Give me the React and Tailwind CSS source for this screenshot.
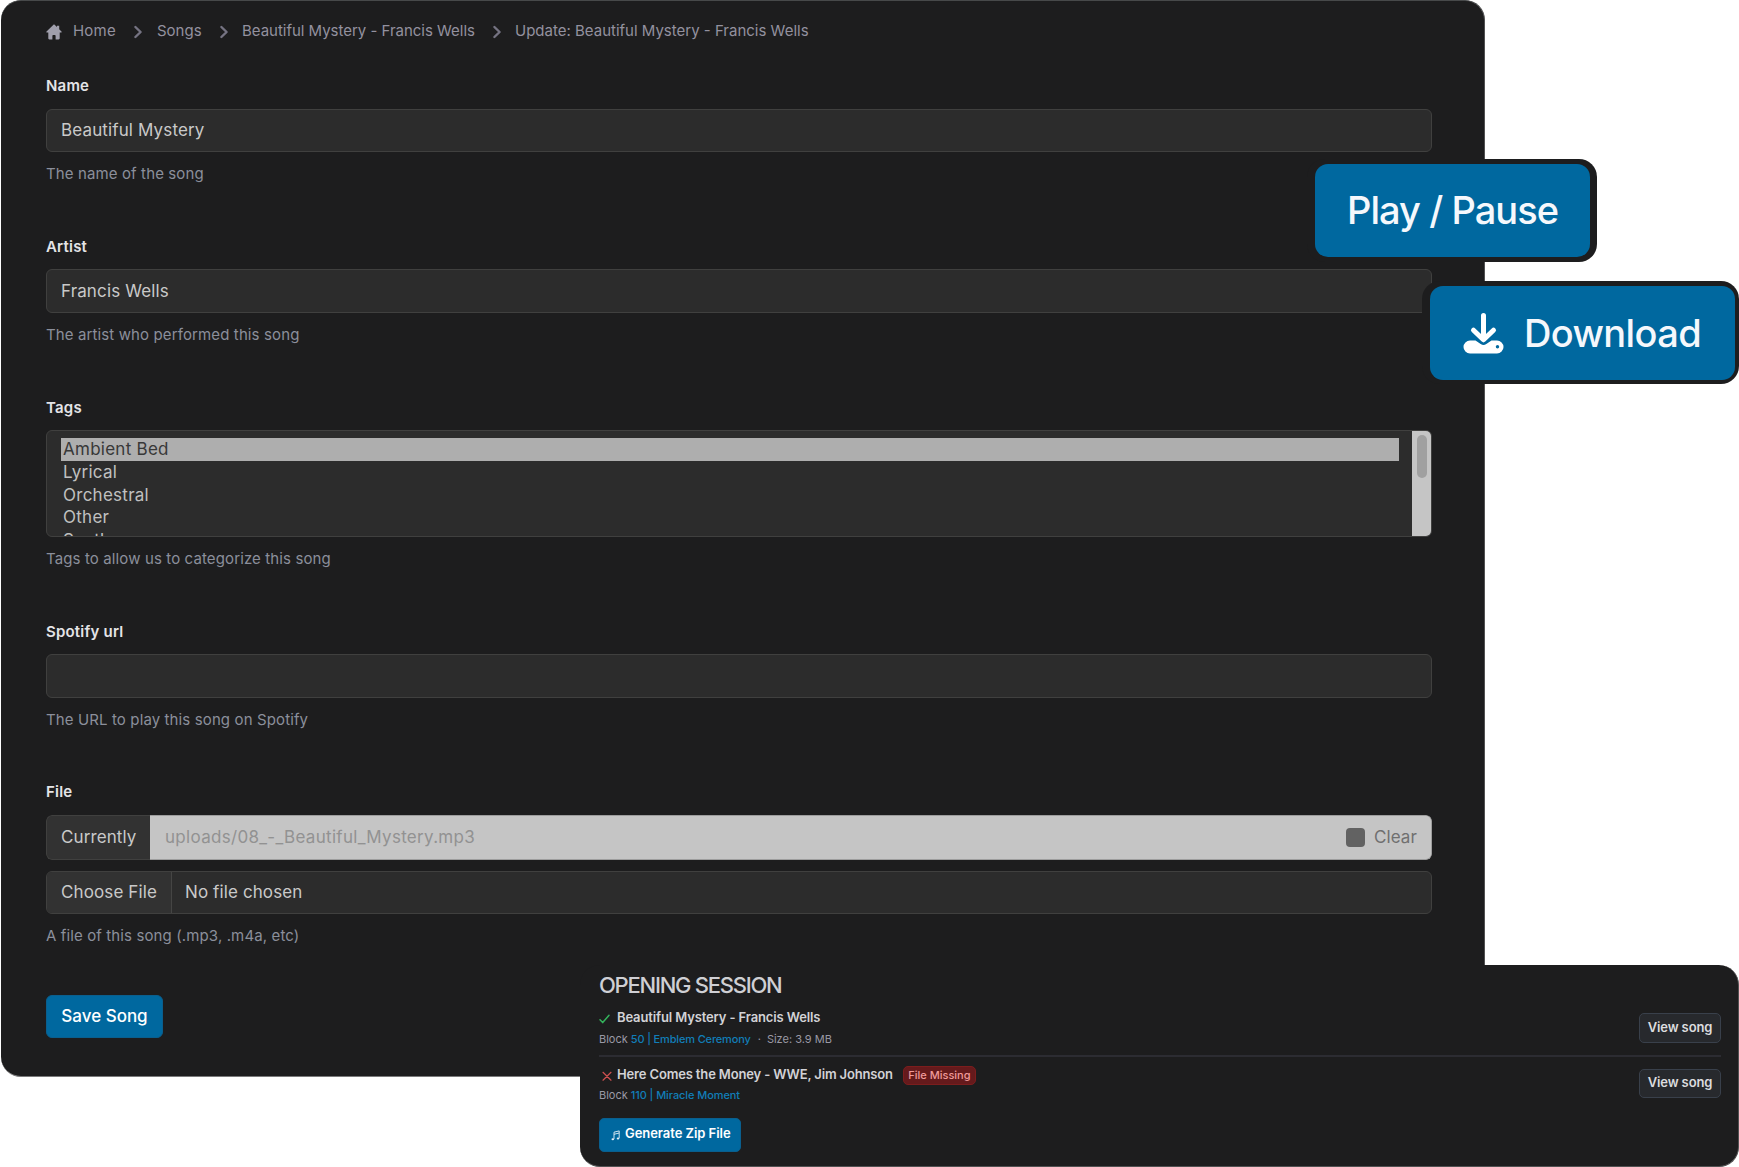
const LABEL = "h-5 leading-5 text-[15px] font-semibold tracking-[0.2px] text-[#e4e4e7]";
const HELP = "h-5 leading-5 text-[15px] tracking-[0.12px] text-[#8b8f9b]";
const INPUT = "flex items-center rounded-[6px] border border-[#40403f] bg-[#2c2c2c] px-[14px] text-[17px] tracking-[0.13px] text-[#c9c9c9]";

function HomeIcon() {
  return (
    <svg className="mt-px h-4 w-4 text-[#a09fac]" viewBox="0 0 16 16" fill="currentColor">
      <path d="M8 .2.500 7.500c-.4.500-.1 1.100.4 1.100h1.400v5.700c0 .7.400 1.200 1.100 1.200h3v-3.700c0-.5.300-.8.800-.8h1.600c.5 0 .8.300.8.800v3.700h3c.7 0 1.100-.5 1.100-1.200V8.600h1.400c.5 0 .8-.6.400-1.100L13.200 5.200V1.800h-2.200v1.300z" />
    </svg>
  );
}

function Chevron({ className }) {
  return (
    <svg className={"mt-[2px] h-[14px] w-[10px] shrink-0 " + className} viewBox="0 0 10 14" fill="none" stroke="#757382" strokeWidth="2.4" strokeLinecap="round" strokeLinejoin="round">
      <path d="M2.400 2 7.600 7 2.400 12" />
    </svg>
  );
}

function DownloadIcon() {
  return (
    <svg className="h-[41px] w-[41px] shrink-0" viewBox="0 0 41 41" fill="none">
      <path d="M7 27.500h5.500l5.200 3.600q2.800 1.700 5.600 0l5.200-3.600H34a6.500 6.500 0 0 1 0 13H7a6.500 6.500 0 0 1 0-13z" fill="white" />
      <circle cx="34.500" cy="33.700" r="1.700" fill="#00689f" />
      <path d="M20.500 2.500v23M10.500 17.200l10 9.600 10-9.600" stroke="white" strokeWidth="5" strokeLinecap="round" strokeLinejoin="round" />
    </svg>
  );
}

function NotesIcon() {
  return (
    <svg className="h-[11px] w-[9px] shrink-0" viewBox="0 0 9 11" fill="none" stroke="#e3f0f7" strokeWidth="0.9">
      <path d="M3 9V2.200L8.200.9v7.300M3 4.300l5.200-1.300" />
      <ellipse cx="1.800" cy="9.200" rx="1.300" ry="1" fill="#e3f0f7" stroke="none" />
      <ellipse cx="7" cy="8.500" rx="1.300" ry="1" fill="#e3f0f7" stroke="none" />
    </svg>
  );
}

function Breadcrumbs() {
  return (
    <nav className="flex h-5 items-center whitespace-nowrap text-[15px] leading-5 text-[#93919f]">
      <HomeIcon />
      <span className="ml-[11px] w-[44px] tracking-[0.2px]">Home</span>
      <Chevron className="ml-[16px]" />
      <span className="ml-[14px] w-[45px]">Songs</span>
      <Chevron className="ml-[17px]" />
      <span className="ml-[13px] w-[233px] tracking-[-0.02px]">Beautiful Mystery - Francis Wells</span>
      <Chevron className="ml-[17px]" />
      <span className="ml-[13px]">Update: Beautiful Mystery - Francis Wells</span>
    </nav>
  );
}

function SongForm() {
  return (
    <div className="ml-px h-[1077px] w-[1484px] rounded-[20px] border-b border-r border-t border-b-[#7a7a7b] border-r-[#515152] border-t-[#47494a] bg-[#1d1d1e] pl-[45px] pt-5">
      <Breadcrumbs />
      <form className="mt-[35px] flex w-[1386px] flex-col">
        <label className={LABEL}>Name</label>
        <div className={INPUT + " mt-[13px] h-[43px]"}>Beautiful Mystery</div>
        <p className={HELP + " mt-3"}>The name of the song</p>

        <label className={LABEL + " mt-[53px]"}>Artist</label>
        <div className={INPUT + " mt-3 h-[44px] pt-px"}>Francis Wells</div>
        <p className={HELP + " mt-3"}>The artist who performed this song</p>

        <label className={LABEL + " mt-[53px]"}>Tags</label>
        <div className="mt-3 flex h-[107px] overflow-hidden rounded-[6px] border border-[#40403f] bg-[#2c2c2c] text-[17px] tracking-[0.26px] text-[#c0c0c0]">
          <ul className="ml-[14px] mt-[7px] w-[1338px]">
            <li className="h-[23px] bg-[#aeaeae] pl-[2px] leading-[23px] text-[#383838]">Ambient Bed</li>
            <li className="h-[23px] pl-[2px] leading-[22px]">Lyrical</li>
            <li className="h-[22px] pl-[2px] leading-[23px]">Orchestral</li>
            <li className="h-[22px] pl-[2px] leading-[22px]">Other</li>
            <li className="h-[22px] pl-[2px] leading-[24px]">Synth</li>
          </ul>
          <div className="ml-auto w-[19px] bg-[#c5c5c5] pl-[5px] pt-1">
            <div className="h-[43px] w-[10px] rounded-full bg-[#a0a0a0]" />
          </div>
        </div>
        <p className={HELP + " mt-3"}>Tags to allow us to categorize this song</p>

        <label className={LABEL + " mt-[53px]"}>Spotify url</label>
        <div className={INPUT + " mt-3 h-[44px]"} />
        <p className={HELP + " mt-3"}>The URL to play this song on Spotify</p>

        <label className={LABEL + " mt-[52px]"}>File</label>
        <div className="mt-[13px] flex h-[45px] overflow-hidden rounded-[6px] text-[17px] tracking-[0.1px]">
          <span className="flex w-[104px] items-center rounded-l-[6px] border border-r-0 border-[#40403f] bg-[#323232] pl-[14px] text-[#c9c9c9]">Currently</span>
          <div className="flex flex-1 items-center rounded-r-[6px] border border-l-0 border-[#9d9d9d] bg-[#c5c5c5] pl-[15px] pr-[14px]">
            <span className="tracking-[0.3px] text-[#929292]">uploads/08_-_Beautiful_Mystery.mp3</span>
            <span className="ml-auto h-[19px] w-[19px] rounded-[4px] bg-[#626262]" />
            <span className="ml-[9px] text-[#707070]">Clear</span>
          </div>
        </div>
        <div className="mt-[11px] flex h-[43px] overflow-hidden rounded-[6px] border border-[#40403f] bg-[#2c2c2c] text-[17px] tracking-[0.11px] text-[#c9c9c9]">
          <span className="flex w-[125px] items-center border-r border-[#454544] bg-[#323232] pl-[14px]">Choose File</span>
          <span className="flex items-center pl-[13px]">No file chosen</span>
        </div>
        <p className={HELP + " mt-3"}>A file of this song (.mp3, .m4a, etc)</p>

        <button type="button" className="mt-[49px] h-[43px] w-[117px] rounded-[6px] border border-[#0a5f8e] bg-[#00689f] text-[17px] font-medium text-white">
          Save Song
        </button>
      </form>
    </div>
  );
}

function ViewSong({ className }) {
  return (
    <button type="button" className={"w-[82px] shrink-0 rounded-[5px] border border-[#39404b] bg-[#27292d] pb-px text-[13px] font-semibold tracking-[-0.13px] text-[#dcdcdf] " + className}>
      View song
    </button>
  );
}

function SessionPanel() {
  return (
    <section className="absolute left-[580px] top-[965px] h-[202px] w-[1159px] whitespace-nowrap rounded-[20px] border-b border-r border-b-[#515152] border-r-[#515152] bg-[#1d1d1e] pl-[19px] pr-[17px] pt-[9px]">
      <h2 className="h-[24px] text-[22px] font-medium leading-[23px] tracking-[-1.25px] text-[#cfcfd4]">OPENING SESSION</h2>
      <div className="mt-[10px] flex h-[49px] justify-between border-b-2 border-[#2c2c32]">
        <div>
          <div className="flex h-5 items-center text-[13px] font-semibold tracking-[-0.13px] text-[#d2d2d6]">
            <svg className="mr-[7px] mt-px h-[10px] w-[11px]" viewBox="0 0 11 10" fill="none" stroke="#34b35c" strokeWidth="1.500" strokeLinecap="round" strokeLinejoin="round">
              <path d="M1 5.800 3.700 8.600 10 1.300" />
            </svg>
            Beautiful Mystery - Francis Wells
          </div>
          <div className="mt-[1px] flex h-5 items-center text-[11px] text-[#9a99a5]">
            <span>Block</span>
            <span className="ml-[3px] font-medium tracking-[-0.15px] text-[#117eb8]">50 | Emblem Ceremony</span>
            <span className="ml-[7px]">·</span>
            <span className="ml-[6px]">Size: 3.9 MB</span>
          </div>
        </div>
        <ViewSong className="mt-[5px] h-[30px]" />
      </div>
      <div className="flex h-[52px] justify-between">
        <div className="pt-[8px]">
          <div className="flex h-5 items-center text-[13px] font-semibold tracking-[-0.15px] text-[#d2d2d6]">
            <svg className="ml-[3px] mr-[5px] mt-[2px] h-[10px] w-[10px]" viewBox="0 0 10 10" fill="none" stroke="#cf5050" strokeWidth="1.200" strokeLinecap="round">
              <path d="M1 1.300 9 9.200M9 1.300 1 9.200" />
            </svg>
            Here Comes the Money - WWE, Jim Johnson
            <span className="ml-[10px] flex h-[19px] w-[73px] items-center justify-center rounded-[5px] border border-[#7c1d1d] bg-[#651a1c] text-[11px] font-medium tracking-normal text-[#f09a9a]">File Missing</span>
          </div>
          <div className="flex h-5 items-center text-[11px] text-[#9a99a5]">
            <span>Block</span>
            <span className="ml-[3px] font-medium tracking-[-0.09px] text-[#117eb8]">110 | Miracle Moment</span>
          </div>
        </div>
        <ViewSong className="mt-[12px] h-[29px]" />
      </div>
      <button type="button" className="mt-[9px] flex h-[34px] w-[142px] items-center rounded-[5px] border border-[#0a5f8e] bg-[#00689f] pb-[2px] pl-[11px] text-[13px] font-semibold tracking-[-0.05px] text-white">
        <span className="mr-[5px] mt-[3px]"><NotesIcon /></span>
        Generate Zip File
      </button>
    </section>
  );
}

export default function App() {
  return (
    <main className="relative h-[1167px] w-[1739px] overflow-hidden bg-white font-['Inter',sans-serif]">
      <SongForm />
      <div className="absolute left-[1307px] top-[159px] h-[103px] w-[290px] rounded-[18px] bg-[#1d1d1e] py-[5px] pl-2 pr-[7px]">
        <button type="button" className="flex h-[93px] w-full items-center whitespace-nowrap rounded-[13px] bg-[#00689f] pl-[32px] text-[38px] font-medium tracking-[-0.95px] text-[#f5f8fc]">
          Play / Pause
        </button>
      </div>
      <div className="absolute left-[1422px] top-[281px] h-[103px] w-[317px] rounded-[18px] bg-[#1d1d1e] pb-1 pl-2 pr-1 pt-[5px]">
        <button type="button" className="flex h-[94px] w-full items-center whitespace-nowrap rounded-[13px] bg-[#00689f] pl-[33px] text-[38px] font-medium tracking-[-0.63px] text-[#f5f8fc]">
          <DownloadIcon />
          <span className="ml-[20px]">Download</span>
        </button>
      </div>
      <SessionPanel />
    </main>
  );
}
